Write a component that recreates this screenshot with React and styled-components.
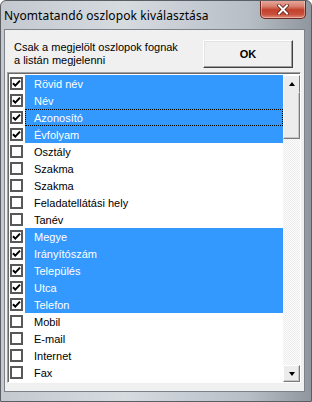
import styled, { createGlobalStyle } from "styled-components";

const GlobalStyle = createGlobalStyle`
  html, body {
    margin: 0;
    padding: 0;
    overflow: hidden;
    background: #fff;
  }
`;

const Window = styled.div`
  width: 312px;
  height: 402px;
  box-sizing: border-box;
  display: flex;
  flex-direction: column;
  background: linear-gradient(90deg, #c3c9cf 0%, #d6dbe0 40%, #b7bec6 80%, #8f969e 100%);
  border: 1px solid #5b5f64;
  border-radius: 6px 6px 0 0;
  overflow: hidden;
`;

const TitleBar = styled.div`
  height: 28px;
  display: flex;
  align-items: flex-start;
  justify-content: space-between;
  padding: 0 5px 0 3px;
`;

const Title = styled.div`
  font-family: "Segoe UI", "Noto Sans", sans-serif;
  font-size: 12px;
  color: #000;
  margin-top: 6px;
  letter-spacing: 0.1px;
`;

const CloseButton = styled.div`
  width: 46px;
  height: 19px;
  margin-top: -1px;
  box-sizing: border-box;
  border: 1px solid #6e2a22;
  border-top: none;
  border-radius: 0 0 5px 5px;
  background: linear-gradient(180deg, #e9aca1 0%, #d9816f 35%, #c2402b 55%, #c9503c 80%, #e08c78 100%);
  display: flex;
  align-items: center;
  justify-content: center;
  box-shadow: inset 0 0 0 1px rgba(255, 255, 255, 0.35);
`;

const Client = styled.div`
  flex: 1;
  margin: 0 6px 9px 3px;
  background: #f0f0f0;
  border: 1px solid #7d8288;
  display: flex;
  flex-direction: column;
  padding: 10px 3px 8px 2px;
`;

const Header = styled.div`
  display: flex;
  justify-content: space-between;
  align-items: flex-start;
  padding: 0 8px 0 7px;
  height: 32px;
`;

const Hint = styled.div`
  font-family: Tahoma, "Liberation Sans", sans-serif;
  font-size: 11px;
  line-height: 13px;
  color: #000;
  margin-top: 1px;
`;

const OkButton = styled.button`
  width: 90px;
  height: 28px;
  box-sizing: border-box;
  background: #f0f0f0;
  border: 1px solid;
  border-color: #fff #404040 #404040 #fff;
  box-shadow: inset -1px -1px 0 #a0a0a0, inset 1px 1px 0 #e3e3e3;
  font-family: Tahoma, "Liberation Sans", sans-serif;
  font-size: 11px;
  font-weight: bold;
  color: #000;
  padding: 0;
`;

const ListBox = styled.div`
  flex: 1;
  display: flex;
  border: 1px solid;
  border-color: #a0a0a0 #fff #fff #a0a0a0;
  box-shadow: inset 1px 1px 0 #696969;
  background: #fff;
  padding: 2px 0 0 2px;
`;

const Items = styled.div`
  flex: 1;
  display: flex;
  flex-direction: column;
`;

const Row = styled.div`
  height: 17px;
  display: flex;
  align-items: center;
`;

const Box = styled.div`
  width: 13px;
  height: 13px;
  box-sizing: border-box;
  border: 2px solid #585858;
  background: #fff;
  margin: 0 2px 0 0;
  display: flex;
  align-items: center;
  justify-content: center;
`;

const Label = styled.div`
  flex: 1;
  height: 17px;
  box-sizing: border-box;
  padding-left: 9px;
  display: flex;
  align-items: center;
  font-family: Tahoma, "Liberation Sans", sans-serif;
  font-size: 11px;
  color: ${(p) => (p.selected ? "#fff" : "#000")};
  background: ${(p) => (p.selected ? "#3399ff" : "transparent")};
  outline: ${(p) => (p.focused ? "1px dotted #000" : "none")};
  outline-offset: -1px;
`;

const Scrollbar = styled.div`
  width: 17px;
  display: flex;
  flex-direction: column;
  background: repeating-conic-gradient(#fdfdfd 0 25%, #ececec 0 50%) 0 0 / 2px 2px;
`;

const ScrollButton = styled.div`
  height: 17px;
  box-sizing: border-box;
  background: #ececec;
  border: 1px solid;
  border-color: #fff #7a7a7a #7a7a7a #fff;
  box-shadow: inset -1px -1px 0 #c8c8c8;
  display: flex;
  align-items: center;
  justify-content: center;
`;

const TopButton = styled(ScrollButton)`
  border-bottom: none;
  box-shadow: none;
`;

const Thumb = styled.div`
  height: 47px;
  box-sizing: border-box;
  background: #ececec;
  border: 1px solid;
  border-color: #ececec #7a7a7a #7a7a7a #fff;
  box-shadow: inset -1px -1px 0 #c8c8c8;
`;

const Track = styled.div`
  flex: 1;
`;

const Arrow = styled.div`
  width: 0;
  height: 0;
  border-left: 3px solid transparent;
  border-right: 3px solid transparent;
  ${(p) =>
    p.up ? "border-bottom: 4px solid #000;" : "border-top: 4px solid #000;"}
`;

const items = [
  ["Rövid név", true],
  ["Név", true],
  ["Azonosító", true, true],
  ["Évfolyam", true],
  ["Osztály", false],
  ["Szakma", false],
  ["Szakma", false],
  ["Feladatellátási hely", false],
  ["Tanév", false],
  ["Megye", true],
  ["Irányítószám", true],
  ["Település", true],
  ["Utca", true],
  ["Telefon", true],
  ["Mobil", false],
  ["E-mail", false],
  ["Internet", false],
  ["Fax", false],
];

function Check() {
  return (
    <svg width="9" height="9" viewBox="0 0 9 9">
      <path d="M1 4.2 L3.3 6.6 L8 1.6" stroke="#000" strokeWidth="2" fill="none" />
    </svg>
  );
}

export default function App() {
  return (
    <>
      <GlobalStyle />
      <Window>
        <TitleBar>
          <Title>Nyomtatandó oszlopok kiválasztása</Title>
          <CloseButton>
            <svg width="12" height="11" viewBox="0 0 12 11">
              <path d="M2 1.5 L10 9.5 M10 1.5 L2 9.5" stroke="#5a1a12" strokeWidth="3.6" strokeLinecap="square" />
              <path d="M2 1.5 L10 9.5 M10 1.5 L2 9.5" stroke="#fff" strokeWidth="2" strokeLinecap="square" />
            </svg>
          </CloseButton>
        </TitleBar>
        <Client>
          <Header>
            <Hint>
              Csak a megjelölt oszlopok fognak
              <br />a listán megjelenni
            </Hint>
            <OkButton>OK</OkButton>
          </Header>
          <ListBox>
            <Items>
              {items.map(([name, checked, focused], i) => (
                <Row key={i}>
                  <Box>{checked && <Check />}</Box>
                  <Label selected={checked} focused={focused}>
                    {name}
                  </Label>
                </Row>
              ))}
            </Items>
            <Scrollbar>
              <TopButton>
                <Arrow up />
              </TopButton>
              <Thumb />
              <Track />
              <ScrollButton>
                <Arrow />
              </ScrollButton>
            </Scrollbar>
          </ListBox>
        </Client>
      </Window>
    </>
  );
}
